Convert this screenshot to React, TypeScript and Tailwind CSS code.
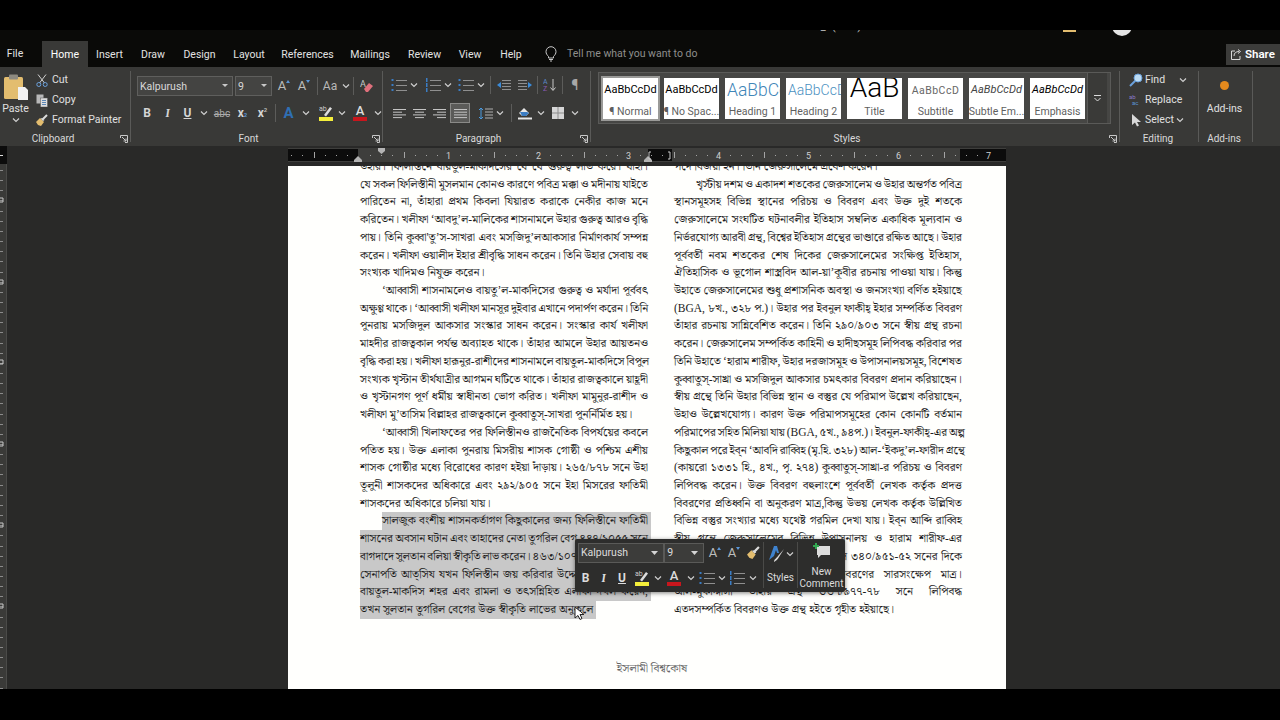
import React from "react";

const UI = "font-['Roboto','Noto_Sans',sans-serif]";
const BN = "font-['Liberation_Serif','Noto_Serif_Bengali','Noto_Sans_Bengali','Lohit_Bengali',serif]";

const Chev = ({ c = "#cfcfcf" }: { c?: string }) => (
  <svg width="8" height="6" viewBox="0 0 8 6" fill="none"><path d="M1 1.5 4 4.5 7 1.5" stroke={c} strokeWidth="1.2" /></svg>
);
const Launcher = () => (
  <svg width="8" height="8" viewBox="0 0 8 8" fill="none" stroke="#c8c8c8"><path d="M.5 3V.5H7.5V7.5H5" /><path d="M2 2 6 6M6 3.5V6H3.5" /></svg>
);
const Align = ({ kind }: { kind: "l" | "c" | "r" | "j" }) => {
  const rows = [13, 9, 13, 9];
  return (
    <svg width="13" height="11" viewBox="0 0 13 11" stroke="#c4c4c4">
      {rows.map((w, i) => {
        const x = kind === "l" || kind === "j" ? 0 : kind === "c" ? (13 - w) / 2 : 13 - w;
        const ww = kind === "j" ? 13 : w;
        return <path key={i} d={`M${x} ${1.5 + i * 2.7}h${ww}`} />;
      })}
    </svg>
  );
};
const ListIcon = ({ num = false }: { num?: boolean }) => (
  <svg width="16" height="14" viewBox="0 0 16 14">
    {[2, 7, 12].map((y) => (
      <g key={y}>
        {num ? (
          <rect x="1" y={y - 2} width="1.500" height="4" fill="#3b7dc4" />
        ) : (
          <rect x="0.500" y={y - 1} width="2" height="2" fill="#3b7dc4" />
        )}
        <path d={`M5 ${y + 0.5}H16`} stroke="#8f8f8f" />
      </g>
    ))}
  </svg>
);
const Clipboard = () => (
  <svg width="24" height="26" viewBox="0 0 24 26">
    <rect x="0" y="3" width="19" height="22" rx="1.5" fill="#e3bd6f" />
    <rect x="5" y="0.5" width="9" height="5" rx="1" fill="#8e8a80" />
    <path d="M14 13h7l3 3v10H14z" fill="#f2f2f2" />
  </svg>
);
const Scissors = () => (
  <svg width="12" height="13" viewBox="0 0 12 13" fill="none">
    <path d="M2 .5 8.500 9M10 .5 3.500 9" stroke="#d0d0d0" />
    <circle cx="2.800" cy="10.500" r="2" stroke="#6ba1dc" />
    <circle cx="9.200" cy="10.500" r="2" stroke="#6ba1dc" />
  </svg>
);
const CopyIcon = () => (
  <svg width="12" height="13" viewBox="0 0 12 13">
    <rect x="0.500" y="0.500" width="7" height="9" fill="#b8b8b8" />
    <rect x="4.500" y="4" width="7" height="9" fill="#dedede" stroke="#555" strokeWidth=".5" />
    <path d="M6 6.500h4M6 8.500h4M6 10.500h4" stroke="#5b87b6" />
  </svg>
);
const Brush = ({ s = 13 }: { s?: number }) => (
  <svg width={s} height={s} viewBox="0 0 13 13">
    <path d="M1 8 5 4l4 4-3 4-3-1z" fill="#e3bd6f" />
    <path d="M5.500 4.500 8 7l1.500-1-2-2z" fill="#dcdcdc" />
    <path d="M8 5 12 1" stroke="#dcdcdc" strokeWidth="2" />
  </svg>
);
const FontGrow = ({ down = false }: { down?: boolean }) => (
  <span className="flex items-start text-[13px] leading-[14px] text-[#bdbdbd]">
    A<svg width="4" height="3" viewBox="0 0 4 3" className="mt-[1px]"><path d={down ? "M0 0h4L2 3z" : "M0 3h4L2 0z"} fill="#5b97d8" /></svg>
  </span>
);
const Highlight = () => (
  <span className="flex h-[16px] w-[15px] flex-col items-center">
    <svg width="14" height="12" viewBox="0 0 14 12">
      <path d="M5 10 11 2l2 1.500-6 8z" fill="#ddd" />
      <text x="0" y="6" fontSize="7" fill="#ccc" fontFamily="Roboto">ab</text>
    </svg>
    <span className="h-[4px] w-[14px] bg-[#f4ee3b]" />
  </span>
);
const FontColor = () => (
  <span className="flex h-[16px] w-[14px] flex-col items-center">
    <span className="text-[13px] leading-[12px] font-medium text-[#dcdcdc]">A</span>
    <span className="h-[4px] w-[14px] bg-[#c8161d]" />
  </span>
);
const Cell = ({ cls, children }: { cls: string; children?: React.ReactNode }) => (
  <div className={`flex shrink-0 items-center justify-center ${cls}`}>{children}</div>
);
const Vr = () => <div className="h-[18px] w-px shrink-0 bg-[#5c5c5a]" />;

const Group = ({ cls, label, lab = "pr-[16px]", launcher = true, children }: { cls: string; label: string; lab?: string; launcher?: boolean; children: React.ReactNode }) => (
  <div className={`relative flex shrink-0 flex-col border-r border-[#5a5a58] ${cls}`}>
    <div className="h-[63px] shrink-0">{children}</div>
    <div className={`flex h-[8px] items-center justify-center text-[10px] text-[#dadada] ${lab}`}>{label}</div>
    {launcher && (
      <span className="absolute right-[2px] -bottom-[1px] flex"><Launcher /></span>
    )}
  </div>
);

const TABS: [string, string][] = [
  ["Insert", "w-[25px] ml-[9px]"],
  ["Draw", "w-[24px] ml-[19px]"],
  ["Design", "w-[31px] ml-[19px]"],
  ["Layout", "w-[30px] ml-[19px]"],
  ["References", "w-[49px] ml-[19px]"],
  ["Mailings", "w-[38px] ml-[19px]"],
  ["Review", "w-[33px] ml-[19px]"],
  ["View", "w-[22px] ml-[18px]"],
  ["Help", "w-[22px] ml-[19px]"],
];

const Tabs = () => (
  <div className="relative flex h-[31px] shrink-0 items-end bg-[#0a0a08] text-[10.500px] text-[#e2e2e2]">
    <div className="flex h-[26px] w-[42px] items-center justify-center pr-[12px]">File</div>
    <div className="flex h-[26px] w-[46px] items-center justify-center bg-[#393937] pt-[2px] text-white">Home</div>
    {TABS.map(([t, c]) => (
      <div key={t} className={`flex h-[26px] items-center justify-center whitespace-nowrap pt-[2px] ${c}`}>{t}</div>
    ))}
    <div className="ml-[21px] flex h-[26px] w-[16px] items-center justify-center">
      <svg width="12" height="16" viewBox="0 0 12 16" fill="none" stroke="#c8c8c8"><path d="M3.500 10.500C2 9 1 7.500 1 5.700a5 5 0 0 1 10 0c0 1.800-1 3.300-2.500 4.800v1.500h-5zM4 13.500h4M5 15h2" /></svg>
    </div>
    <div className="ml-[8px] flex h-[26px] items-center whitespace-nowrap text-[#8f8f8d]">Tell me what you want to do</div>
    <div className="absolute top-[8px] right-0 flex h-[21px] w-[54px] items-center gap-[3px] bg-[#3c3c3a] pl-[5px] text-[11.500px] font-semibold text-white">
      <svg width="11" height="11" viewBox="0 0 11 11" fill="none" stroke="#d8d8d8"><path d="M4 2H.5v8.500h8.500V7M3 7c0-3 2-4.500 5-4.500M7 .5l2.500 2L7 4.500" /></svg>
      Share
    </div>
  </div>
);

const ClipboardGroup = () => (
  <Group cls="w-[131px]" label="Clipboard" lab="pr-[24px]">
    <div className="flex h-full">
      <div className="flex w-[31px] flex-col items-center pt-[3px] text-[10.500px] leading-[14px] text-[#e0e0e0]">
        <Clipboard />
        <span className="mt-[2px]">Paste</span>
        <span className="mt-[1px]"><Chev /></span>
      </div>
      <div className="ml-[4px] -mt-[1px] flex flex-col text-[10.500px] text-[#e0e0e0]">
        {[
          [<Scissors key="s" />, "Cut"],
          [<CopyIcon key="c" />, "Copy"],
          [<Brush key="b" />, "Format Painter"],
        ].map(([i, t], k) => (
          <div key={k} className="flex h-[20px] items-center gap-[4px] whitespace-nowrap">
            <span className="flex w-[13px] justify-center">{i}</span>
            {t}
          </div>
        ))}
      </div>
    </div>
  </Group>
);

const FontGroup = () => (
  <Group cls="w-[252px]" label="Font">
    <div className="flex flex-col pt-[5px] pl-[6px]">
      <div className="flex h-[20px] items-center">
        <div className="flex h-[20px] w-[96px] items-center justify-between border border-[#5f5f5d] bg-[#444442] pr-[4px] pl-[2px] text-[10.500px] text-[#d8d8d8]">
          <span className="pt-[1px]">Kalpurush</span>
          <svg width="6" height="4" viewBox="0 0 6 4"><path d="M0 0h6L3 3z" fill="#c8c8c8" /></svg>
        </div>
        <div className="ml-[2px] flex h-[20px] w-[37px] items-center justify-between border border-[#5f5f5d] bg-[#444442] pr-[4px] pl-[2px] text-[10.500px] text-[#d8d8d8]">
          <span className="pt-[1px]">9</span>
          <svg width="6" height="4" viewBox="0 0 6 4"><path d="M0 0h6L3 3z" fill="#c8c8c8" /></svg>
        </div>
        <Cell cls="w-[20px] ml-[2px]"><FontGrow /></Cell>
        <Cell cls="w-[20px]"><FontGrow down /></Cell>
        <div className="ml-[3px]"><Vr /></div>
        <Cell cls="w-[24px]"><span className="text-[12px] text-[#b8b8b8]">Aa</span></Cell>
        <Chev />
        <div className="ml-[3px]"><Vr /></div>
        <Cell cls="w-[26px]">
          <svg width="14" height="14" viewBox="0 0 14 14"><text x="0" y="8" fontSize="9" fill="#c8c8c8" fontFamily="Roboto">A</text><path d="M4 10l5-6 4 3-5 6H6z" fill="#e0707c" /></svg>
        </Cell>
      </div>
      <div className="mt-[7px] flex h-[20px] items-center text-[12px] text-[#d4d4d4]">
        <Cell cls="w-[20px] font-bold">B</Cell>
        <Cell cls="w-[21px] font-serif italic font-semibold">I</Cell>
        <Cell cls="w-[19px] font-bold underline">U</Cell>
        <Cell cls="w-[14px]"><Chev /></Cell>
        <Cell cls="w-[22px] text-[10px] text-[#aaa] line-through">abc</Cell>
        <Cell cls="w-[19px] font-bold">x<sub className="text-[6px] text-[#5b97d8]">2</sub></Cell>
        <Cell cls="w-[21px] font-bold">x<sup className="text-[6px] text-[#bbb]">2</sup></Cell>
        <div className="ml-[2px]"><Vr /></div>
        <Cell cls="w-[25px] text-[15px] font-bold text-[#2f6fb3]">A</Cell>
        <Cell cls="w-[10px]"><Chev /></Cell>
        <Cell cls="w-[23px] ml-[3px]"><Highlight /></Cell>
        <Cell cls="w-[10px]"><Chev /></Cell>
        <Cell cls="w-[26px]"><FontColor /></Cell>
        <Cell cls="w-[10px]"><Chev /></Cell>
      </div>
    </div>
  </Group>
);

const ParagraphGroup = () => (
  <Group cls="w-[208px]" label="Paragraph">
    <div className="flex flex-col pt-[6px] pl-[7px]">
      <div className="flex h-[16px] items-center">
        <Cell cls="w-[18px]"><ListIcon /></Cell>
        <Cell cls="w-[12px]"><Chev /></Cell>
        <Cell cls="w-[18px] ml-[4px]"><ListIcon num /></Cell>
        <Cell cls="w-[12px]"><Chev /></Cell>
        <Cell cls="w-[18px] ml-[3px]"><ListIcon /></Cell>
        <Cell cls="w-[12px]"><Chev /></Cell>
        <div className="ml-[3px]"><Vr /></div>
        <Cell cls="w-[22px] ml-[2px]">
          <svg width="14" height="12" viewBox="0 0 14 12"><path d="M5 1.500h9M5 4.500h9M5 7.500h9M5 10.500h9" stroke="#8f8f8f" /><path d="M4 3v6L0 6z" fill="#3b8bd8" /></svg>
        </Cell>
        <Cell cls="w-[20px]">
          <svg width="14" height="12" viewBox="0 0 14 12"><path d="M0 1.500h9M0 4.500h9M0 7.500h9M0 10.500h9" stroke="#8f8f8f" /><path d="M10 3v6l4-3z" fill="#3b8bd8" /></svg>
        </Cell>
        <div className="ml-[2px]"><Vr /></div>
        <Cell cls="w-[24px]">
          <svg width="14" height="14" viewBox="0 0 14 14"><text x="0" y="6" fontSize="7" fill="#5b87c6" fontFamily="Roboto">A</text><text x="0" y="13" fontSize="7" fill="#8a5bb6" fontFamily="Roboto">Z</text><path d="M10 1v11M7.500 9.500 10 12.500 12.500 9.500" stroke="#c8c8c8" fill="none" /></svg>
        </Cell>
        <Vr />
        <Cell cls="w-[24px] text-[14px] text-[#a8a8a8]">¶</Cell>
      </div>
      <div className="mt-[10px] -ml-[1px] flex h-[20px] items-center">
        <Cell cls="w-[20px]"><Align kind="l" /></Cell>
        <Cell cls="w-[20px]"><Align kind="c" /></Cell>
        <Cell cls="w-[21px]"><Align kind="r" /></Cell>
        <Cell cls="w-[20px] h-[20px] border border-[#8a8a88] bg-[#5b5b59]"><Align kind="j" /></Cell>
        <Cell cls="w-[20px] ml-[5px]">
          <svg width="15" height="13" viewBox="0 0 15 13"><path d="M3 1v11M1 3l2-2 2 2M1 10l2 2 2-2" stroke="#4b9be0" fill="none" /><path d="M7 2h8M7 5h8M7 8h8M7 11h8" stroke="#b0b0b0" /></svg>
        </Cell>
        <Cell cls="w-[10px]"><Chev /></Cell>
        <div className="ml-[6px]"><Vr /></div>
        <Cell cls="w-[24px]">
          <svg width="15" height="14" viewBox="0 0 15 14"><path d="M2 7l5-5 5 5-3 3H5z" fill="#e8e8e8" /><path d="M3 6h7l2 1-3 3H5z" fill="#3b7dc4" /><path d="M1 12.500h14" stroke="#e8e8e8" strokeWidth="2" /></svg>
        </Cell>
        <Cell cls="w-[10px]"><Chev /></Cell>
        <Cell cls="w-[20px] ml-[2px]">
          <svg width="12" height="12" viewBox="0 0 12 12"><rect width="12" height="12" fill="#d6d6d6" /><path d="M6 0v12M0 6h12" stroke="#8c8c8c" /></svg>
        </Cell>
        <Cell cls="w-[10px] ml-[2px]"><Chev /></Cell>
      </div>
    </div>
  </Group>
);

const STYLES: { s: string; l: string; c: string }[] = [
  { s: "AaBbCcDd", l: "¶ Normal", c: "text-[11px] text-black justify-center" },
  { s: "AaBbCcDd", l: "¶ No Spac...", c: "text-[11px] text-black justify-center" },
  { s: "AaBbCc", l: "Heading 1", c: "text-[17.500px] font-light text-[#3f86b8] pl-[2px]" },
  { s: "AaBbCcD", l: "Heading 2", c: "text-[14px] font-light text-[#4a90bf] pl-[2px]" },
  { s: "AaB", l: "Title", c: "text-[28px] pb-[6px] text-black font-light justify-center" },
  { s: "AaBbCcD", l: "Subtitle", c: "text-[10.500px] tracking-[.5px] text-[#666] justify-center" },
  { s: "AaBbCcDd", l: "Subtle Em...", c: "text-[11px] italic text-[#444] justify-center" },
  { s: "AaBbCcDd", l: "Emphasis", c: "text-[11px] italic text-black justify-center" },
];

const StylesGroup = () => (
  <Group cls="w-[529px]" label="Styles">
    <div className="pt-[1px] pl-[7px]">
      <div className="flex h-[52px] w-[513px] items-center border border-[#5a5a58] bg-[#464644] pl-[4px]">
        <div className="flex gap-[6px]">
          {STYLES.map((x, i) => (
            <div
              key={x.l}
              className={`flex h-[41px] w-[55px] flex-col items-center overflow-hidden bg-white ${i === 0 ? "outline-2 outline-[#9a9a98]" : ""}`}
            >
              <div className={`flex h-[26px] w-full shrink-0 items-center overflow-hidden whitespace-nowrap ${x.c}`}>{x.s}</div>
              <div className="pt-[1px] text-[10.500px] leading-[14px] whitespace-nowrap text-[#5f5f5f]">{x.l}</div>
            </div>
          ))}
        </div>
        <div className="ml-[2px] flex h-full w-[20px] items-center justify-center border-l border-[#5a5a58] bg-[#3a3a38]">
          <svg width="9" height="7" viewBox="0 0 9 7" fill="none" stroke="#dcdcdc"><path d="M1 .5h7" /><path d="M1.500 3 4.500 6l3-3" /></svg>
        </div>
      </div>
    </div>
  </Group>
);

const EditingGroup = () => (
  <Group cls="w-[79px]" label="Editing" lab="pr-[2px]" launcher={false}>
    <div className="-mt-[1px] flex flex-col pl-[9px] text-[10.500px] text-[#e0e0e0]">
      <div className="flex h-[20px] items-center gap-[2px]">
        <svg width="14" height="14" viewBox="0 0 14 14" fill="none"><circle cx="9" cy="5" r="4" fill="#bcdcf4" stroke="#6ba1dc" /><path d="M6 8 1 13" stroke="#6ba1dc" strokeWidth="2" /></svg>
        <span className="w-[32px]">Find</span>
        <Chev />
      </div>
      <div className="flex h-[20px] items-center gap-[2px]">
        <svg width="14" height="12" viewBox="0 0 14 12"><text x="0" y="5" fontSize="6" fill="#8a7ac6" fontFamily="Roboto">ab</text><text x="3" y="11" fontSize="6" fill="#5b97d8" fontFamily="Roboto">ac</text></svg>
        Replace
      </div>
      <div className="flex h-[20px] items-center gap-[2px]">
        <svg width="14" height="13" viewBox="0 0 14 13"><path d="M3 0v11l3-2.500 2 4 2-1-2-3.500h4z" fill="#d8d8d8" /></svg>
        <span>Select</span>
        <Chev />
      </div>
    </div>
  </Group>
);

const AddinsGroup = () => (
  <Group cls="w-[54px]" label="Add-ins" lab="pr-[3px]" launcher={false}>
    <div className="flex flex-col items-center pt-[10px] pr-[2px] text-[10.500px] text-[#e0e0e0]">
      <span className="h-[9px] w-[9px] rounded-full bg-[#e58a1d]" />
      <span className="mt-[11px]">Add-ins</span>
    </div>
  </Group>
);

const Ruler = () => {
  const items: { x: number; k: number }[] = [];
  for (let k = -6; k <= 56; k++) items.push({ x: 358.500 + k * 11.250, k });
  return (
    <svg width="718" height="14" viewBox="288 148 718 14" className="block">
      <rect x="288" y="148" width="718" height="14" fill="#3e3e3c" />
      <rect x="288" y="149" width="70" height="12" fill="#0c0c0c" />
      <rect x="648" y="149" width="24" height="12" fill="#0c0c0c" />
      <rect x="960" y="149" width="46" height="12" fill="#0c0c0c" />
      {items.map(({ x, k }) => {
        const m = ((k % 8) + 8) % 8;
        if (m === 0) return null;
        const major = m === 4;
        return <rect key={k} x={Math.round(x)} y={major ? 152 : 155} width="1" height={major ? 6 : 1} fill="#a4a4a4" />;
      })}
      {[1, 2, 3, 4, 5, 6, 7].map((t) => (
        <text key={t} x={358.500 + t * 90} y="158.500" textAnchor="middle" fontSize="9" fill="#cfcfcf" fontFamily="Roboto">{t}</text>
      ))}
      <path d="M378 148h7v3l-3.500 3-3.500-3z" fill="#b4b4b4" />
      <path d="M358 156l4 4v6h-8v-6z" fill="#b4b4b4" />
      <path d="M648 156l4 4v6h-8v-6z" fill="#b4b4b4" />
      <path d="M651 152h-2v7h2M668 152h2v7h-2" stroke="#c8c8c8" fill="none" />
    </svg>
  );
};

const LeftRuler = () => {
  const ys: number[] = [];
  for (let y = 170; y < 688; y += 10.150) ys.push(Math.round(y));
  return (
    <svg width="7" height="543" viewBox="0 146 7 543" className="block">
      <rect x="0" y="146" width="6" height="543" fill="#3a3a38" />
      <rect x="6" y="146" width="1" height="543" fill="#4a4a48" />
      {ys.map((y) => <rect key={y} x="0" y={y} width="3" height="1" fill="#8a8a8a" />)}
      {[200, 282, 362, 444, 525, 606].map((y) => (
        <path key={y} d={`M0 ${y - 2}h3v4H0`} stroke="#c8c8c8" fill="none" />
      ))}
      <rect x="0" y="146" width="10" height="18" fill="#0c0c0c" />
      <rect x="0" y="155" width="3" height="1" fill="#ddd" />
    </svg>
  );
};

type L = { t: string; i?: boolean; e?: boolean; s?: boolean };

const LEFT: L[] = [
  { t: "উহার। ফিলিস্তিনে বায়তুল-মাকদিসের যে যে গুরুত্ব লাভ করে। যাহা।" },
  { t: "যে সকল ফিলিস্তীনী মুসলমান কোনও কারণে পবিত্র মক্কা ও মদীনায় যাইতে" },
  { t: "পারিতেন না, তাঁহারা প্রথম কিবলা যিয়ারত করাকে নেকীর কাজ মনে" },
  { t: "করিতেন। খলীফা ‘আবদু’ল-মালিকের শাসনামলে উহার গুরুত্ব আরও বৃদ্ধি" },
  { t: "পায়। তিনি কুব্বা'তু’স-সাখরা এবং মসজিদু’লআকসার নির্মাণকার্য সম্পন্ন" },
  { t: "করেন। খলীফা ওয়ালীদ ইহার শ্রীবৃদ্ধি সাধন করেন। তিনি উহার সেবায় বহু" },
  { t: "সংখ্যক খাদিমও নিযুক্ত করেন।", e: true },
  { t: "‘আব্বাসী শাসনামলেও বায়তু’ল-মাকদিসের গুরুত্ব ও মর্যাদা পূর্ববৎ", i: true },
  { t: "অক্ষুণ্ণ থাকে। ‘আব্বাসী খলীফা মানসূর দুইবার এখানে পদার্পণ করেন। তিনি" },
  { t: "পুনরায় মসজিদুল আকসার সংস্কার সাধন করেন। সংস্কার কার্য খলীফা" },
  { t: "মাহদীর রাজত্বকাল পর্যন্ত অব্যাহত থাকে। তাঁহার আমলে উহার আয়তনও" },
  { t: "বৃদ্ধি করা হয়। খলীফা হারূনুর-রাশীদের শাসনামলে বায়তুল-মাকদিসে বিপুল" },
  { t: "সংখ্যক খৃস্টান তীর্থযাত্রীর আগমন ঘটিতে থাকে। তাঁহার রাজত্বকালে য়াহূদী" },
  { t: "ও খৃস্টানগণ পূর্ণ ধর্মীয় স্বাধীনতা ভোগ করিত। খলীফা মামুনুর-রাশীদ ও" },
  { t: "খলীফা মু’তাসিম বিল্লাহর রাজত্বকালে কুব্বাতুস্-সাখরা পুনর্নির্মিত হয়।", e: true },
  { t: "‘আব্বাসী খিলাফতের পর ফিলিস্তীনও রাজনৈতিক বিপর্যয়ের কবলে", i: true },
  { t: "পতিত হয়। উক্ত এলাকা পুনরায় মিসরীয় শাসক গোষ্ঠী ও পশ্চিম এশীয়" },
  { t: "শাসক গোষ্ঠীর মধ্যে বিরোধের কারণ হইয়া দাঁড়ায়। ২৬৫/৮৭৮ সনে উহা" },
  { t: "তূলুনী শাসকদের অধিকারে এবং ২৯২/৯০৫ সনে ইহা মিসরের ফাতিমী" },
  { t: "শাসকদের অধিকারে চলিয়া যায়।", e: true },
  { t: "সালজুক বংশীয় শাসনকর্তাগণ কিছুকালের জন্য ফিলিস্তীনে ফাতিমী", i: true, s: true },
  { t: "শাসনের অবসান ঘটান এবং তাহাদের নেতা তুগরিল বেগ ৪৪৭/১০৫৫ সনে", s: true },
  { t: "বাগদাদে সুলতান বলিয়া স্বীকৃতি লাভ করেন। ৪৬৩/১০৭১ সনে মালিক শাহের", s: true },
  { t: "সেনাপতি আত্সিয যখন ফিলিস্তীন জয় করিবার উদ্দেশ্যে অগ্রসর হইয়া", s: true },
  { t: "বায়তুল-মাকদিস শহর এবং রামলা ও তৎসন্নিহিত এলাকা দখল করেন,", s: true },
  { t: "তখন সুলতান তুগরিল বেগের উক্ত স্বীকৃতি লাভের অনুকূলে", e: true, s: true },
];

const RIGHT: L[] = [
  { t: "পদে বিজয়ী হন। তিনি জেরুসালেমে প্রবেশ করেন।", e: true },
  { t: "খৃস্টীয় দশম ও একাদশ শতকের জেরুসালেম ও উহার অন্তর্গত পবিত্র", i: true },
  { t: "স্থানসমূহসহ বিভিন্ন স্থানের পরিচয় ও বিবরণ এবং উক্ত দুই শতকে" },
  { t: "জেরুসালেমে সংঘটিত ঘটনাবলীর ইতিহাস সম্বলিত একাধিক মূল্যবান ও" },
  { t: "নির্ভরযোগ্য আরবী গ্রন্থ, বিশ্বের ইতিহাস গ্রন্থের ভাণ্ডারে রক্ষিত আছে। উহার" },
  { t: "পূর্ববর্তী নবম শতকের শেষ দিকের জেরুসালেমের সংক্ষিপ্ত ইতিহাস," },
  { t: "ঐতিহাসিক ও ভূগোল শাস্ত্রবিদ আল-য়া’কূবীর রচনায় পাওয়া যায়। কিন্তু" },
  { t: "উহাতে জেরুসালেমের শুধু প্রশাসনিক অবস্থা ও জনসংখ্যা বর্ণিত হইয়াছে" },
  { t: "(BGA, ৮খ., ৩২৮ প.)। উহার পর ইবনুল ফাকীহ্ ইহার সম্পর্কিত বিবরণ" },
  { t: "তাঁহার রচনায় সান্নিবেশিত করেন। তিনি ২৯০/৯০৩ সনে স্বীয় গ্রন্থ রচনা" },
  { t: "করেন। জেরুসালেম সম্পর্কিত কাহিনী ও হাদীছসমূহ লিপিবদ্ধ করিবার পর" },
  { t: "তিনি উহাতে ‘হারাম শারীফ, উহার দরজাসমূহ ও উপাসনালয়সমূহ, বিশেষত" },
  { t: "কুব্বাতুস্-সাখ্রা ও মসজিদুল আকসার চমৎকার বিবরণ প্রদান করিয়াছেন।" },
  { t: "স্বীয় গ্রন্থে তিনি উহার বিভিন্ন স্থান ও বস্তুর যে পরিমাপ উল্লেখ করিয়াছেন," },
  { t: "উহাও উল্লেখযোগ্য। কারণ উক্ত পরিমাপসমূহের কোন কোনটি বর্তমান" },
  { t: "পরিমাপের সহিত মিলিয়া যায় (BGA, ৫খ., ৯৪প.)। ইবনুল-ফাকীহ্-এর অল্প" },
  { t: "কিছুকাল পরে ইব্ন ‘আবদি রাব্বিহ (মৃ.হি. ৩২৮) আল-‘ইকদু’ল-ফারীদ গ্রন্থে" },
  { t: "(কায়রো ১৩৩১ হি., ৪খ., পৃ. ২৭৪) কুব্বাতুস্-সাখ্রা-র পরিচয় ও বিবরণ" },
  { t: "লিপিবদ্ধ করেন। উক্ত বিবরণ বহুলাংশে পূর্ববর্তী লেখক কর্তৃক প্রদত্ত" },
  { t: "বিবরণের প্রতিধ্বনি বা অনুকরণ মাত্র,কিন্তু উভয় লেখক কর্তৃক উল্লিখিত" },
  { t: "বিভিন্ন বস্তুর সংখ্যার মধ্যে যথেষ্ট গরমিল দেখা যায়। ইব্ন আব্দি রাব্বিহ" },
  { t: "স্বীয় গ্রন্থে জেরুসালেমের বিভিন্ন উপাসনালয় ও হারাম শারীফ-এর" },
  { t: "বিবরণ দিয়াছেন। ইস্তাখরী ও ইবন হাওকাল ৩৪০/৯৫১-৫২ সনের দিকে" },
  { t: "তাঁহাদের গ্রন্থে পূর্ববর্তী লেখকদের বিবরণের সারসংক্ষেপ মাত্র।" },
  { t: "আল-মুকাদ্দাসী তাঁহার গ্রন্থ ৩৬৭/৯৭৭-৭৮ সনে লিপিবদ্ধ" },
  { t: "এতদসম্পর্কিত বিবরণও উক্ত গ্রন্থ হইতে গৃহীত হইয়াছে।", e: true },
];

const Line = ({ l }: { l: L }) => (
  <div className={`h-[17.720px] ${l.i ? "pl-[22px]" : ""}`}>
    <div
      className={`h-[17.720px] leading-[17.720px] whitespace-nowrap ${l.s ? "bg-[#c8c8c8]" : ""} ${
        l.e ? (l.s ? "w-[236px]" : "") : "[text-align-last:justify] [text-align:justify] [word-spacing:-1px]"
      } ${l.s && !l.e ? "-mr-[3px] pr-[3px]" : ""}`}
    >
      {l.t}
    </div>
  </div>
);

const Page = () => (
  <div className={`h-[523px] w-[718px] overflow-hidden bg-[#fffffd] pl-[72px] ${BN} text-[11.500px] text-[#1c1c1c]`}>
    <div className="-mt-[8px] flex gap-[26px]">
      <div className="w-[288px]">{LEFT.map((l, i) => <Line key={i} l={l} />)}</div>
      <div className="w-[288px]">{RIGHT.map((l, i) => <Line key={i} l={l} />)}</div>
    </div>
    <div className="mt-[41px] pr-[62px] text-center text-[11.800px] text-[#666]">ইসলামী বিশ্বকোষ</div>
  </div>
);

const MiniToolbar = () => (
  <div className="absolute top-[539px] left-[575px] flex h-[53px] w-[270px] rounded-[2px] bg-[#2d2d2c] pt-[4px] pl-[3px] text-[10.500px] text-[#dcdcdc] shadow-[0_1px_4px_rgba(0,0,0,.5)]">
    <div className="flex w-[185px] flex-col">
      <div className="flex h-[20px] items-center">
        <div className="flex h-[20px] w-[87px] items-center justify-between border border-[#5a5a58] bg-[#3c3c3a] pr-[5px] pl-[2px]">
          Kalpurush
          <svg width="7" height="4" viewBox="0 0 7 4"><path d="M0 0h7L3.500 4z" fill="#d4d4d4" /></svg>
        </div>
        <div className="flex h-[20px] w-[40px] items-center justify-between border border-[#5a5a58] bg-[#3c3c3a] pr-[5px] pl-[2px]">
          9
          <svg width="7" height="4" viewBox="0 0 7 4"><path d="M0 0h7L3.500 4z" fill="#d4d4d4" /></svg>
        </div>
        <Cell cls="w-[20px] ml-[1px]"><FontGrow /></Cell>
        <Cell cls="w-[18px]"><FontGrow down /></Cell>
        <Cell cls="w-[20px]"><Brush s={14} /></Cell>
      </div>
      <div className="mt-[5px] flex h-[20px] items-center -ml-[1px] text-[12px]">
        <Cell cls="w-[17px] font-bold">B</Cell>
        <Cell cls="w-[19px] font-serif font-semibold italic">I</Cell>
        <Cell cls="w-[18px] font-bold underline">U</Cell>
        <Cell cls="w-[22px]"><Highlight /></Cell>
        <Cell cls="w-[9px]"><Chev /></Cell>
        <Cell cls="w-[24px]"><FontColor /></Cell>
        <Cell cls="w-[9px]"><Chev /></Cell>
        <Cell cls="w-[23px]"><ListIcon /></Cell>
        <Cell cls="w-[8px]"><Chev /></Cell>
        <Cell cls="w-[22px]"><ListIcon num /></Cell>
        <Cell cls="w-[9px]"><Chev /></Cell>
      </div>
    </div>
    <div className="-mt-[1px] h-[46px] w-px bg-[#4a4a48]" />
    <div className="flex w-[33px] flex-col items-center">
      <div className="mt-[1px] flex h-[20px] items-center gap-[1px]">
        <svg width="17" height="18" viewBox="0 0 17 18"><path d="M1 15 6 1h3l2 7H9L8 5 6 11z" fill="#3f83cf" /><path d="M6 17c0-3 3-4 4-6l6-7-5 8c-1 2-3 4-5 5z" fill="#d8d8d8" /></svg>
        <Chev />
      </div>
      <div className="mt-[6px] text-[10px]">Styles</div>
    </div>
    <div className="-mt-[1px] h-[46px] w-px bg-[#4a4a48]" />
    <div className="flex w-[47px] flex-col items-center text-[10px] leading-[12px]">
      <svg width="17" height="15" viewBox="0 0 17 15"><path d="M4 3h13v9H8l-3 3v-3H4z" fill="#dcdcdc" /><path d="M3 0v6M0 3h6" stroke="#33a852" strokeWidth="2" /></svg>
      <span className="mt-[8px]">New</span>
      <span>Comment</span>
    </div>
  </div>
);

export default function App() {
  return (
    <div className={`relative flex h-[720px] w-[1280px] flex-col overflow-hidden bg-black ${UI}`}>
      <div className="h-[30px] shrink-0 bg-black" />
      <div className="relative h-[6px] shrink-0 overflow-hidden bg-[#0a0a08]">
        <div className="-mt-[9px] pl-[430px] text-center text-[11px] leading-[12px] text-[#bdbdbd]">
          <span className="inline-block w-[420px]">5_1(1-48) - Word</span>
        </div>
        <span className="absolute top-0 left-[1063px] h-[2px] w-[13px] bg-[#e3bd6f]" />
        <span className="absolute -top-[14px] left-[1112px] h-[20px] w-[20px] rounded-full bg-[#e4e4e4]" />
      </div>
      <Tabs />
      <div className="flex h-[79px] shrink-0 bg-[#393937] pt-[4px] pb-[4px]">
        <ClipboardGroup />
        <FontGroup />
        <ParagraphGroup />
        <StylesGroup />
        <EditingGroup />
        <AddinsGroup />
      </div>
      <div className="flex h-[543px] shrink-0 bg-[#292928]">
        <LeftRuler />
        <div className="ml-[281px] flex w-[718px] flex-col">
          <div className="flex h-[20px] shrink-0 items-start pt-[2px]"><Ruler /></div>
          <Page />
        </div>
      </div>
      <div className="flex-1 bg-black" />
      <MiniToolbar />
      <svg width="12" height="16" viewBox="0 0 12 16" className="absolute top-[606px] left-[574px]">
        <path d="M1 1v11l3-2.500 2 4 2-1-2-4h4z" fill="#fff" stroke="#222" strokeWidth="1" />
      </svg>
    </div>
  );
}
